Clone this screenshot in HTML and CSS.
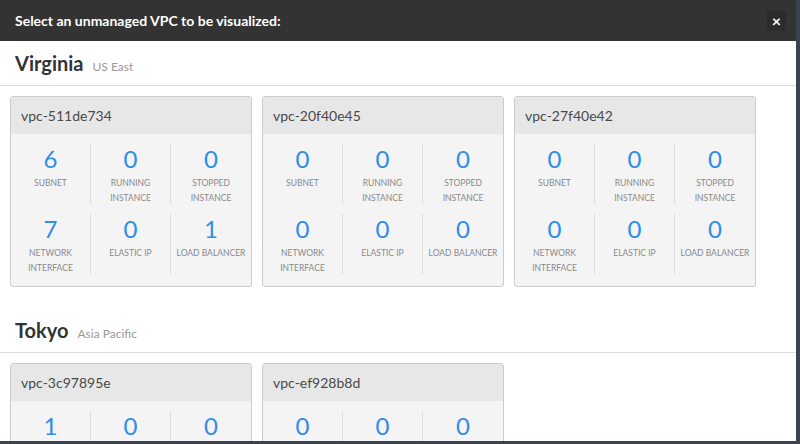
FILE: index.html
```
<!DOCTYPE html>
<html>
<head>
<meta charset="utf-8">
<link rel="stylesheet" href="styles.css">
</head>
<body>
<div class="modal">
  <div class="modal-header">
    <span class="modal-title">Select an unmanaged VPC to be visualized:</span>
    <span class="close">&times;</span>
  </div>
  <div class="modal-body">
    <section class="region">
      <div class="region-title"><span class="region-name">Virginia</span><span class="region-sub">US East</span></div>
      <div class="cards">
        <div class="card">
          <div class="card-head">vpc-511de734</div>
          <div class="card-body">
            <div class="cell"><div class="num">6</div><div class="lbl">Subnet</div></div>
            <div class="cell"><div class="num">0</div><div class="lbl">Running instance</div></div>
            <div class="cell"><div class="num">0</div><div class="lbl">Stopped instance</div></div>
            <div class="cell"><div class="num">7</div><div class="lbl">Network interface</div></div>
            <div class="cell"><div class="num">0</div><div class="lbl">Elastic IP</div></div>
            <div class="cell"><div class="num">1</div><div class="lbl">Load balancer</div></div>
          </div>
        </div>
        <div class="card">
          <div class="card-head">vpc-20f40e45</div>
          <div class="card-body">
            <div class="cell"><div class="num">0</div><div class="lbl">Subnet</div></div>
            <div class="cell"><div class="num">0</div><div class="lbl">Running instance</div></div>
            <div class="cell"><div class="num">0</div><div class="lbl">Stopped instance</div></div>
            <div class="cell"><div class="num">0</div><div class="lbl">Network interface</div></div>
            <div class="cell"><div class="num">0</div><div class="lbl">Elastic IP</div></div>
            <div class="cell"><div class="num">0</div><div class="lbl">Load balancer</div></div>
          </div>
        </div>
        <div class="card">
          <div class="card-head">vpc-27f40e42</div>
          <div class="card-body">
            <div class="cell"><div class="num">0</div><div class="lbl">Subnet</div></div>
            <div class="cell"><div class="num">0</div><div class="lbl">Running instance</div></div>
            <div class="cell"><div class="num">0</div><div class="lbl">Stopped instance</div></div>
            <div class="cell"><div class="num">0</div><div class="lbl">Network interface</div></div>
            <div class="cell"><div class="num">0</div><div class="lbl">Elastic IP</div></div>
            <div class="cell"><div class="num">0</div><div class="lbl">Load balancer</div></div>
          </div>
        </div>
      </div>
    </section>
    <section class="region">
      <div class="region-title"><span class="region-name">Tokyo</span><span class="region-sub">Asia Pacific</span></div>
      <div class="cards">
        <div class="card">
          <div class="card-head">vpc-3c97895e</div>
          <div class="card-body">
            <div class="cell"><div class="num">1</div><div class="lbl">Subnet</div></div>
            <div class="cell"><div class="num">0</div><div class="lbl">Running instance</div></div>
            <div class="cell"><div class="num">0</div><div class="lbl">Stopped instance</div></div>
            <div class="cell"><div class="num">0</div><div class="lbl">Network interface</div></div>
            <div class="cell"><div class="num">0</div><div class="lbl">Elastic IP</div></div>
            <div class="cell"><div class="num">0</div><div class="lbl">Load balancer</div></div>
          </div>
        </div>
        <div class="card">
          <div class="card-head">vpc-ef928b8d</div>
          <div class="card-body">
            <div class="cell"><div class="num">0</div><div class="lbl">Subnet</div></div>
            <div class="cell"><div class="num">0</div><div class="lbl">Running instance</div></div>
            <div class="cell"><div class="num">0</div><div class="lbl">Stopped instance</div></div>
            <div class="cell"><div class="num">0</div><div class="lbl">Network interface</div></div>
            <div class="cell"><div class="num">0</div><div class="lbl">Elastic IP</div></div>
            <div class="cell"><div class="num">0</div><div class="lbl">Load balancer</div></div>
          </div>
        </div>
      </div>
    </section>
  </div>
</div>
</body>
</html>
```
FILE: styles.css
```
html, body {
  margin: 0;
  padding: 0;
  height: 100%;
  background: #3b4350;
  overflow: hidden;
}
body {
  font-family: Lato, "Open Sans", sans-serif;
}
.modal {
  width: 796px;
  height: 441px;
  background: #fff;
  overflow: hidden;
}
.modal-header {
  height: 41px;
  background: #333333;
  display: flex;
  align-items: center;
  justify-content: space-between;
  padding: 0 10px 0 15px;
}
.modal-title {
  color: #fff;
  font-weight: 700;
  font-size: 14px;
  line-height: 41px;
}
.close {
  width: 19px;
  height: 20px;
  background: #2b2b2b;
  color: #fff;
  font-weight: 700;
  font-size: 16px;
  line-height: 20px;
  text-align: center;
}
.region-title {
  display: flex;
  align-items: baseline;
  padding: 10px 15px;
  border-bottom: 1px solid #dddddd;
}
.region-name {
  font-size: 20px;
  line-height: 24px;
  font-weight: 700;
  color: #333;
}
.region-sub {
  font-size: 12px;
  line-height: 16px;
  color: #999;
  margin-left: 9px;
}
.cards {
  display: flex;
  gap: 10px;
  padding: 10px 10px 21px;
}
.card {
  width: 242px;
  box-sizing: border-box;
  border: 1px solid #cccccc;
  border-radius: 3px;
  background: #f4f4f4;
  overflow: hidden;
}
.card-head {
  background: #e7e7e7;
  padding: 9px 10px 8px;
  font-size: 14px;
  line-height: 20px;
  color: #4a4a4a;
}
.card-body {
  display: grid;
  grid-template-columns: repeat(3, 1fr);
  row-gap: 10px;
  padding: 10px 0 12px;
}
.cell {
  height: 60px;
  text-align: center;
  border-right: 1px solid #dddddd;
  padding: 0 2px;
}
.cell:nth-child(3n) {
  border-right: none;
}
.num {
  font-size: 24px;
  line-height: 30px;
  color: #2f8de9;
}
.lbl {
  font-size: 8.5px;
  line-height: 15px;
  padding-top: 2px;
  color: #8a8a8a;
  text-transform: uppercase;
}
```
